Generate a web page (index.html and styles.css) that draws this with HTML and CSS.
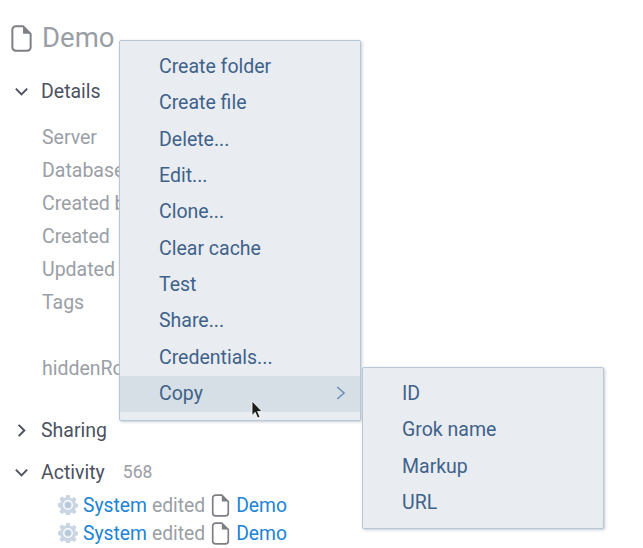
FILE: index.html
```html
<!DOCTYPE html>
<html lang="en">
<head>
<meta charset="utf-8">
<title>Demo</title>
<link rel="stylesheet" href="styles.css">
</head>
<body>
<svg class="defs" width="0" height="0" aria-hidden="true">
  <defs>
    <symbol id="file" viewBox="0 0 20 26">
      <path d="M4.500 1.200h7L18.800 8.500V21.500a3.300 3.300 0 0 1-3.300 3.300H4.500a3.300 3.300 0 0 1-3.300-3.300V4.500A3.300 3.300 0 0 1 4.500 1.200z" fill="none" stroke="currentColor" stroke-width="1.900" stroke-linejoin="round"/>
      <path d="M11.500 1.200V8.500H18.800z" fill="currentColor"/>
    </symbol>
    <symbol id="gear" viewBox="0 0 20 20">
      <path d="M8.300 0h3.400l.5 2.800 1.700.7 2.300-1.600 2.400 2.400-1.600 2.300.7 1.700 2.800.5v3.400l-2.800.5-.7 1.700 1.600 2.300-2.400 2.400-2.300-1.600-1.700.7-.5 2.800H8.300l-.5-2.800-1.700-.7-2.300 1.600-2.400-2.400 1.600-2.300-.7-1.700L-.5 11.700V8.300l2.800-.5.700-1.700-1.600-2.300 2.400-2.400 2.300 1.600 1.700-.7z" fill="#c9d5e2"/>
      <circle cx="10" cy="10" r="4.300" fill="none" stroke="#fff" stroke-width="1.300"/>
      <circle cx="10" cy="10" r="2.600" fill="#b8c7d8"/>
    </symbol>
  </defs>
</svg>

<main class="page">
  <h1 class="title">
    <svg class="title-icon"><use href="#file"/></svg>
    <span class="title-text">Demo</span>
  </h1>

  <section class="pane">
    <div class="pane-head">
      <svg class="chev" viewBox="0 0 12 12"><path d="M2 4l4 4 4-4"/></svg>
      <span>Details</span>
    </div>
    <dl class="props">
      <dt>Server</dt>
      <dt>Database</dt>
      <dt>Created by</dt>
      <dt>Created</dt>
      <dt>Updated</dt>
      <dt>Tags</dt>
      <dt class="gap">hiddenRole</dt>
    </dl>
  </section>

  <section class="pane sharing">
    <div class="pane-head">
      <svg class="chev" viewBox="0 0 12 12"><path d="M4 2l4 4-4 4"/></svg>
      <span>Sharing</span>
    </div>
  </section>

  <section class="pane activity">
    <div class="pane-head">
      <svg class="chev" viewBox="0 0 12 12"><path d="M2 4l4 4 4-4"/></svg>
      <span>Activity</span>
      <span class="count">568</span>
    </div>
    <ul class="feed">
      <li>
        <svg class="gear"><use href="#gear"/></svg>
        <a>System</a> <span class="verb">edited</span>
        <svg class="feed-file"><use href="#file"/></svg>
        <a>Demo</a>
      </li>
      <li>
        <svg class="gear"><use href="#gear"/></svg>
        <a>System</a> <span class="verb">edited</span>
        <svg class="feed-file"><use href="#file"/></svg>
        <a>Demo</a>
      </li>
    </ul>
  </section>
</main>

<ul class="menu menu-main">
  <li>Create folder</li>
  <li>Create file</li>
  <li>Delete...</li>
  <li>Edit...</li>
  <li>Clone...</li>
  <li>Clear cache</li>
  <li>Test</li>
  <li>Share...</li>
  <li>Credentials...</li>
  <li class="active">Copy
    <svg class="sub-arrow" viewBox="0 0 12 12"><path d="M3.500 2l4.500 4-4.500 4"/></svg>
  </li>
</ul>

<ul class="menu menu-sub">
  <li>ID</li>
  <li>Grok name</li>
  <li>Markup</li>
  <li>URL</li>
</ul>

<svg class="cursor" viewBox="0 0 12 19"><path d="M1 1v14.500l3.200-3.200 2.400 5.700 2.400-1-2.400-5.500H11z" fill="#1c1c1c" stroke="#fff" stroke-width=".8"/></svg>
</body>
</html>
```

FILE: styles.css
```css
* { box-sizing: border-box; }

html, body {
  margin: 0;
  height: 548px;
  overflow: hidden;
  background: #fff;
}

body {
  font-family: Roboto, sans-serif;
  font-size: 19.500px;
  color: #4d5261;
  position: relative;
}

.defs { position: absolute; }

.page { padding: 20px 0 0 11px; }

.title {
  display: flex;
  align-items: center;
  gap: 10px;
  margin: 0;
  height: 36px;
  font-size: 27.500px;
  font-weight: 400;
  color: #9a9ea6;
}

.title-text { padding-bottom: 2px; }

.title-icon {
  width: 21px;
  height: 27px;
  color: #7d7f85;
}

.pane-head {
  display: flex;
  align-items: center;
  height: 24px;
  margin-top: 23px;
  padding-left: 2px;
}

.chev {
  width: 17px;
  height: 17px;
  margin-right: 11px;
  fill: none;
  stroke: #4d5261;
  stroke-width: 1.400;
}

.props {
  margin: 18px 0 0 31px;
  color: #9a9ea6;
}

.props dt {
  height: 33px;
  line-height: 33px;
  white-space: nowrap;
}

.props .gap { margin-top: 33px; }

.sharing .pane-head { margin-top: 33px; }

.activity .pane-head { margin-top: 18px; }

.count {
  margin-left: 18px;
  font-size: 17.500px;
  color: #9a9ea6;
}

.feed {
  list-style: none;
  margin: 7px 0 0 47px;
  padding: 0;
  font-size: 19.300px;
}

.feed li {
  display: flex;
  align-items: center;
  height: 28px;
  white-space: pre;
  color: #9a9ea6;
}

.feed a { color: #2083d5; }

.gear {
  width: 20px;
  height: 20px;
  margin-right: 5px;
  overflow: visible;
}

.verb { margin-left: 5px; }

.feed-file {
  width: 19px;
  height: 23px;
  margin: 0 6px;
  color: #7d7f85;
}

.menu {
  position: absolute;
  list-style: none;
  margin: 0;
  padding: 7.250px 0;
  width: 242px;
  background: #e9edf1;
  border: 1px solid #b9c6d6;
  border-radius: 2px;
  box-shadow: 1px 1px 3px rgba(125, 140, 160, .45);
  color: #3f628a;
}

.menu li {
  position: relative;
  display: flex;
  align-items: center;
  height: 36.333px;
}

.menu-main {
  left: 119px;
  top: 40px;
  height: 381px;
}

.menu-main li { padding-left: 39px; }

.menu-sub {
  left: 362px;
  top: 367px;
  height: 162px;
  padding-top: 7.333px;
}

.menu-sub li { padding-left: 39px; }

.menu .active {
  background: #d7dfe6;
  background-clip: padding-box;
  border-top: 1px solid transparent;
  padding-bottom: 1.500px;
}

.sub-arrow {
  position: absolute;
  right: 10px;
  top: 8px;
  width: 18px;
  height: 18px;
  fill: none;
  stroke: #6f92b8;
  stroke-width: 1.100;
}

.cursor {
  position: absolute;
  left: 251px;
  top: 400px;
  width: 12px;
  height: 19px;
}
```
